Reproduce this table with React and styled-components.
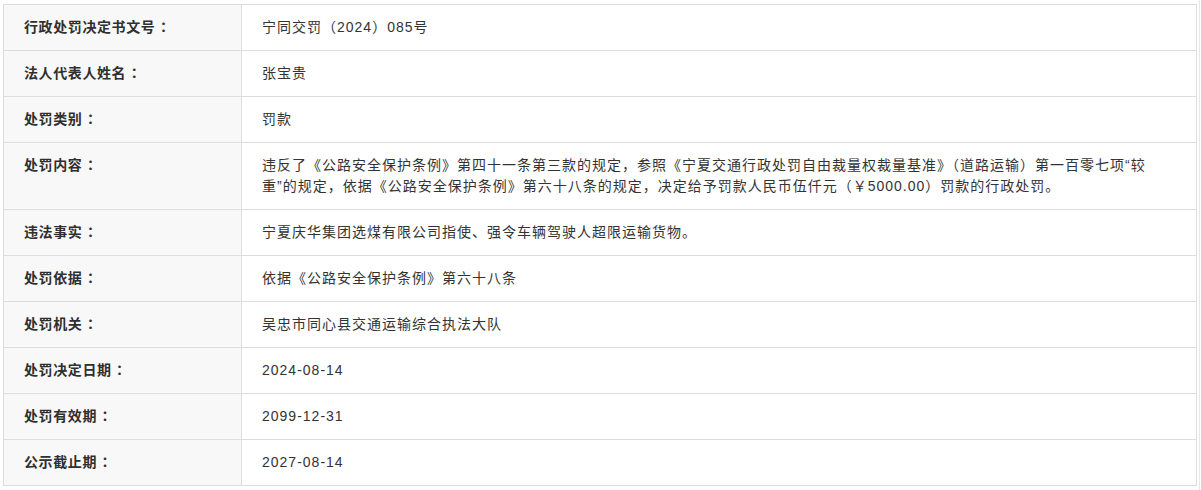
import React from "react";
import styled, { createGlobalStyle } from "styled-components";

const GlobalStyle = createGlobalStyle`
  html, body {
    margin: 0;
    padding: 0;
    background: #ffffff;
  }
  body {
    font-family: "Liberation Sans", "Noto Sans CJK SC", sans-serif;
    color: #333333;
  }
`;

const Page = styled.div`
  box-sizing: border-box;
  width: 1200px;
  min-height: 100vh;
  padding: 4px 0 0 3px;
  border-right: 1px solid #e6e6ee;
`;

const Sheet = styled.div`
  box-sizing: border-box;
  width: 1194px;
  display: grid;
  grid-template-columns: 238px 955px;
  border-top: 1px solid #dddddd;
  border-left: 1px solid #dddddd;
`;

const Cell = styled.div`
  box-sizing: border-box;
  height: ${(p) => (p.$lines || 1) * 21 + 25}px;
  border-right: 1px solid #dddddd;
  border-bottom: 1px solid #dddddd;
  padding: 12px 30px 12px 20px;
  font-size: 14px;
  line-height: 21px;
  font-family: "Liberation Sans", "Noto Sans CJK SC", sans-serif;
  overflow: hidden;
`;

const Label = styled(Cell)`
  background: #f8f8f8;
  font-weight: 700;
  color: #2f2f2f;
  letter-spacing: 0.6px;
`;

const Colon = styled.span`
  font-family: "Noto Sans CJK TC", "Noto Sans CJK SC", sans-serif;
  line-height: 0;
  margin-left: 1px;
`;

const Value = styled(Cell)`
  background: #ffffff;
  font-weight: 400;
  color: #333333;
  letter-spacing: 1px;
`;

const rows = [
  ["行政处罚决定书文号", "宁同交罚（2024）085号"],
  ["法人代表人姓名", "张宝贵"],
  ["处罚类别", "罚款"],
  [
    "处罚内容",
    "违反了《公路安全保护条例》第四十一条第三款的规定，参照《宁夏交通行政处罚自由裁量权裁量基准》（道路运输）第一百零七项“较重”的规定，依据《公路安全保护条例》第六十八条的规定，决定给予罚款人民币伍仟元（￥5000.00）罚款的行政处罚。",
    2,
  ],
  ["违法事实", "宁夏庆华集团选煤有限公司指使、强令车辆驾驶人超限运输货物。"],
  ["处罚依据", "依据《公路安全保护条例》第六十八条"],
  ["处罚机关", "吴忠市同心县交通运输综合执法大队"],
  ["处罚决定日期", "2024-08-14"],
  ["处罚有效期", "2099-12-31"],
  ["公示截止期", "2027-08-14"],
];

export default function App() {
  return (
    <>
      <GlobalStyle />
      <Page>
        <Sheet>
          {rows.map(([k, v, lines]) => (
            <React.Fragment key={k}>
              <Label $lines={lines}>
                {k}
                <Colon>：</Colon>
              </Label>
              <Value $lines={lines}>{v}</Value>
            </React.Fragment>
          ))}
        </Sheet>
      </Page>
    </>
  );
}
